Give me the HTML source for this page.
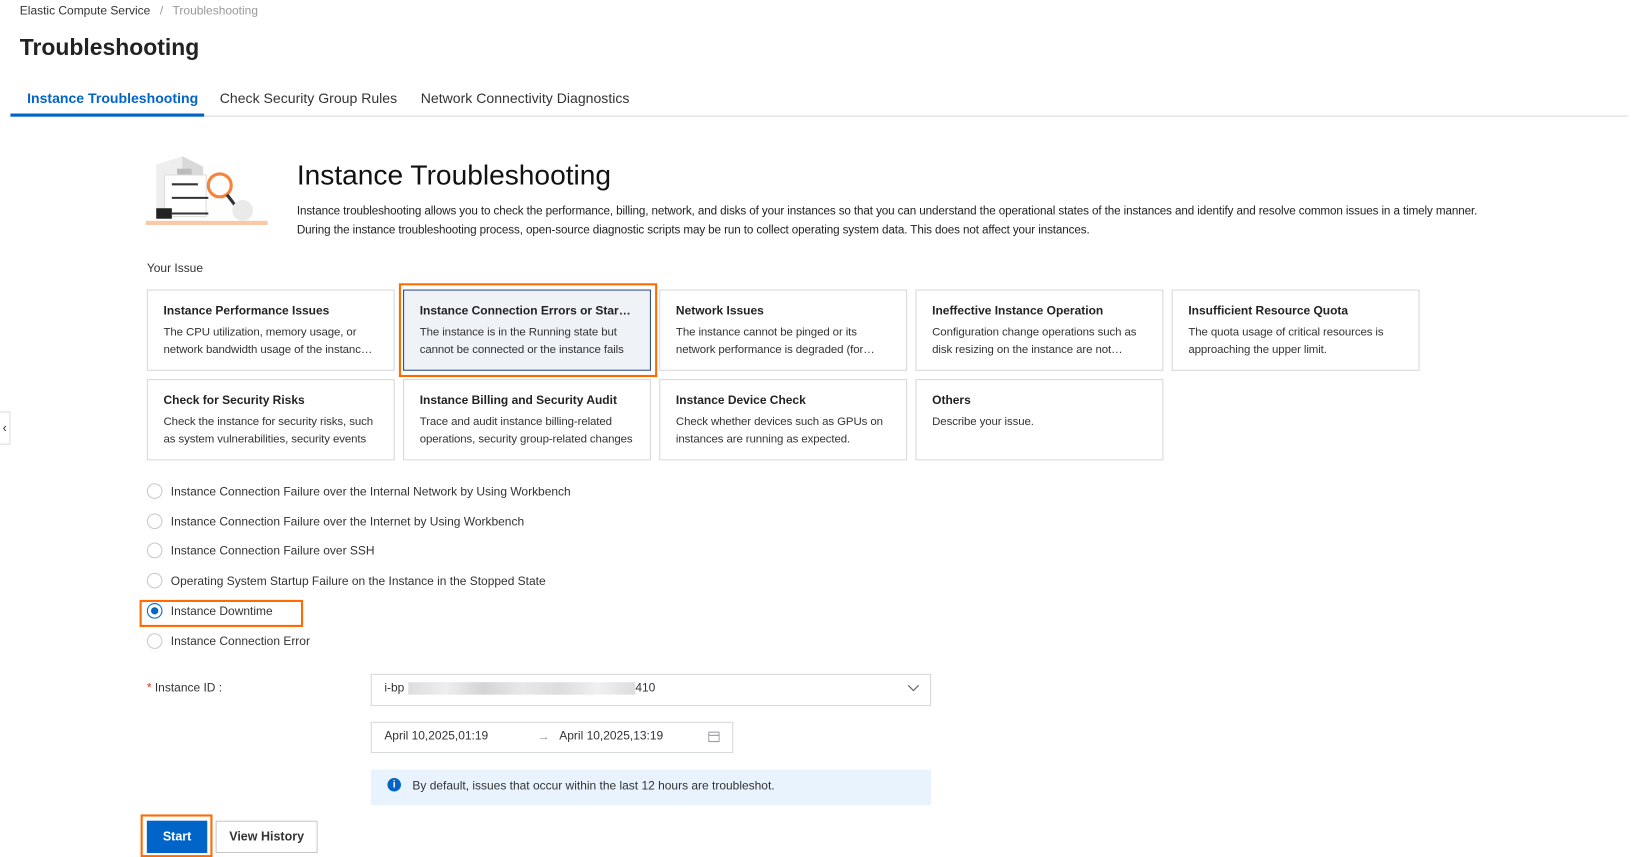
<!DOCTYPE html>
<html><head><meta charset="utf-8"><style>
*{box-sizing:border-box;margin:0;padding:0}
body{width:1633px;height:856px;background:#fff;font-family:"Liberation Sans",sans-serif;color:#333;font-size:12px;position:relative;overflow:hidden}
#w{position:absolute;left:0;top:0;width:1568px;height:822px;transform:scale(1.0415);transform-origin:0 0}
.a{position:absolute;white-space:nowrap}
.card{position:absolute;width:238px;height:78px;border:1px solid #d5d8dc;background:#fff;padding:14px 15px 0}
.card b{display:block;font-size:11.5px;font-weight:600;color:#222;margin-bottom:6px;white-space:nowrap;overflow:hidden;text-overflow:ellipsis}
.card p{font-size:11px;line-height:17px;color:#333;white-space:normal;display:-webkit-box;-webkit-line-clamp:2;-webkit-box-orient:vertical;overflow:hidden;letter-spacing:-0.1px}
.r{position:absolute;left:141px;font-size:11.5px;color:#333;white-space:nowrap}
.r i{display:inline-block;width:15px;height:15px;border:1px solid #c8c8c8;border-radius:50%;vertical-align:middle;margin-right:8px;position:relative;top:-1px}
.ob{position:absolute;border:2px solid #ff6a00}
</style></head><body><div id="w">
<div class="a" style="left:19px;top:5px;font-size:11.5px;color:#333">Elastic Compute Service <span style="color:#999;margin:0 6px">/</span> <span style="color:#999">Troubleshooting</span></div>
<div class="a" style="left:19px;top:33px;font-size:22px;font-weight:600;color:#222">Troubleshooting</div>
<div class="a" style="left:26px;top:87px;font-size:13.5px;font-weight:600;color:#0064c8">Instance Troubleshooting</div>
<div class="a" style="left:211px;top:87px;font-size:13.5px;color:#333">Check Security Group Rules</div>
<div class="a" style="left:404px;top:87px;font-size:13.5px;color:#333">Network Connectivity Diagnostics</div>
<div class="a" style="left:10px;top:111px;width:1553px;height:1px;background:#d5d8dc"></div>
<div class="a" style="left:10px;top:109px;width:186px;height:3px;background:#0064c8"></div>
<svg class="a" style="left:140px;top:150px" width="118" height="68" viewBox="0 0 118 68">
<path d="M10 8 L35 0 L55 10 L55 58 L10 58 Z" fill="#eee"/><path d="M35 0 L55 10 L55 58 L35 50Z" fill="#d9d9d9"/>
<rect x="30" y="12" width="14" height="42" fill="#bbb"/>
<rect x="18" y="18" width="40" height="40" fill="#fff" stroke="#ddd"/>
<line x1="25" y1="27" x2="50" y2="27" stroke="#333" stroke-width="2"/><line x1="25" y1="40" x2="60" y2="40" stroke="#333" stroke-width="2"/><line x1="25" y1="55" x2="60" y2="55" stroke="#333" stroke-width="2"/>
<path d="M10 50 L25 50 L25 60 L10 60Z" fill="#222"/>
<circle cx="71" cy="28" r="11" fill="none" stroke="#f5833b" stroke-width="3"/>
<line x1="78" y1="37" x2="88" y2="50" stroke="#333" stroke-width="3"/>
<circle cx="93" cy="52" r="10" fill="#eaeaea"/>
<rect x="0" y="62" width="117" height="4" fill="#f9c9a6"/>
</svg>
<div class="a" style="left:285px;top:153px;font-size:27px;color:#111">Instance Troubleshooting</div>
<div class="a" style="left:285px;top:194px;width:1160px;font-size:11.2px;line-height:18px;white-space:normal;color:#222;letter-spacing:-0.1px">Instance troubleshooting allows you to check the performance, billing, network, and disks of your instances so that you can understand the operational states of the instances and identify and resolve common issues in a timely manner. During the instance troubleshooting process, open-source diagnostic scripts may be run to collect operating system data. This does not affect your instances.</div>
<div class="a" style="left:141px;top:252px;font-size:11.5px;color:#333">Your Issue</div>

<div class="card" style="left:141px;top:278px"><b>Instance Performance Issues</b><p>The CPU utilization, memory usage, or network bandwidth usage of the instance is high</p></div>
<div class="card" style="left:387px;top:278px;background:#eff2f7;border-color:#2a4b7c"><b>Instance Connection Errors or Startup Failures</b><p>The instance is in the Running state but cannot be connected or the instance fails</p></div>
<div class="card" style="left:633px;top:278px"><b>Network Issues</b><p>The instance cannot be pinged or its network performance is degraded (for example)</p></div>
<div class="card" style="left:879px;top:278px"><b>Ineffective Instance Operation</b><p>Configuration change operations such as disk resizing on the instance are not effective</p></div>
<div class="card" style="left:1125px;top:278px"><b>Insufficient Resource Quota</b><p>The quota usage of critical resources is approaching the upper limit.</p></div>
<div class="card" style="left:141px;top:364px"><b>Check for Security Risks</b><p>Check the instance for security risks, such as system vulnerabilities, security events</p></div>
<div class="card" style="left:387px;top:364px"><b>Instance Billing and Security Audit</b><p>Trace and audit instance billing-related operations, security group-related changes</p></div>
<div class="card" style="left:633px;top:364px"><b>Instance Device Check</b><p>Check whether devices such as GPUs on instances are running as expected.</p></div>
<div class="card" style="left:879px;top:364px"><b>Others</b><p>Describe your issue.</p></div>
<div class="ob" style="left:383px;top:272px;width:248px;height:90px"></div>

<div class="a" style="left:0;top:395px;width:10px;height:32px;border:1px solid #ddd;border-left:none;background:#fff;font-size:12px;line-height:30px;text-align:center;color:#333">‹</div>

<div class="r" style="top:465px"><i></i>Instance Connection Failure over the Internal Network by Using Workbench</div>
<div class="r" style="top:494px"><i></i>Instance Connection Failure over the Internet by Using Workbench</div>
<div class="r" style="top:522px"><i></i>Instance Connection Failure over SSH</div>
<div class="r" style="top:551px"><i></i>Operating System Startup Failure on the Instance in the Stopped State</div>
<div class="r" style="top:580px"><i style="border-color:#0064c8"><span style="position:absolute;left:3px;top:3px;width:7px;height:7px;border-radius:50%;background:#0064c8"></span></i>Instance Downtime</div>
<div class="r" style="top:609px"><i></i>Instance Connection Error</div>
<div class="ob" style="left:134px;top:576px;width:157px;height:26px"></div>

<div class="a" style="left:141px;top:655px;font-size:11.5px;color:#333"><span style="color:#d93026">*</span> Instance ID :</div>
<div class="a" style="left:356px;top:647px;width:538px;height:31px;border:1px solid #d5d8dc"></div>
<div class="a" style="left:369px;top:655px;font-size:11.5px">i-bp</div>
<div class="a" style="left:392px;top:655px;width:218px;height:12px;background:linear-gradient(90deg,#ddd,#eee,#d4d4d4,#e8e8e8,#ddd,#f0f0f0,#ddd)"></div>
<div class="a" style="left:610px;top:655px;font-size:11.5px">410</div>
<svg class="a" style="left:871px;top:656px" width="12" height="10"><path d="M1 2 L6 7 L11 2" fill="none" stroke="#666" stroke-width="1.2"/></svg>
<div class="a" style="left:356px;top:693px;width:348px;height:30px;border:1px solid #d5d8dc"></div>
<div class="a" style="left:369px;top:701px;font-size:11.5px">April 10,2025,01:19</div>
<div class="a" style="left:516px;top:700px;font-size:12px;color:#999">→</div>
<div class="a" style="left:537px;top:701px;font-size:11.5px">April 10,2025,13:19</div>
<svg class="a" style="left:680px;top:701px" width="11" height="12"><rect x="0.5" y="2" width="10" height="9" fill="none" stroke="#999"/><line x1="0.5" y1="5" x2="10.5" y2="5" stroke="#999"/></svg>
<div class="a" style="left:356px;top:739px;width:538px;height:34px;background:#e8f3fe"></div>
<div class="a" style="left:372px;top:747px;width:13px;height:13px;border-radius:50%;background:#0064c8;color:#fff;font-size:10px;font-weight:bold;text-align:center;line-height:13px">i</div>
<div class="a" style="left:396px;top:749px;font-size:11.5px;color:#333">By default, issues that occur within the last 12 hours are troubleshot.</div>
<div class="a" style="left:141px;top:788px;width:58px;height:31px;background:#0064c8;color:#fff;font-size:12px;font-weight:600;text-align:center;line-height:31px">Start</div>
<div class="ob" style="left:135px;top:782px;width:69px;height:41px"></div>
<div class="a" style="left:207px;top:788px;width:98px;height:31px;border:1px solid #c8c8c8;color:#333;font-size:12px;font-weight:600;text-align:center;line-height:29px">View History</div>
</div></body></html>
